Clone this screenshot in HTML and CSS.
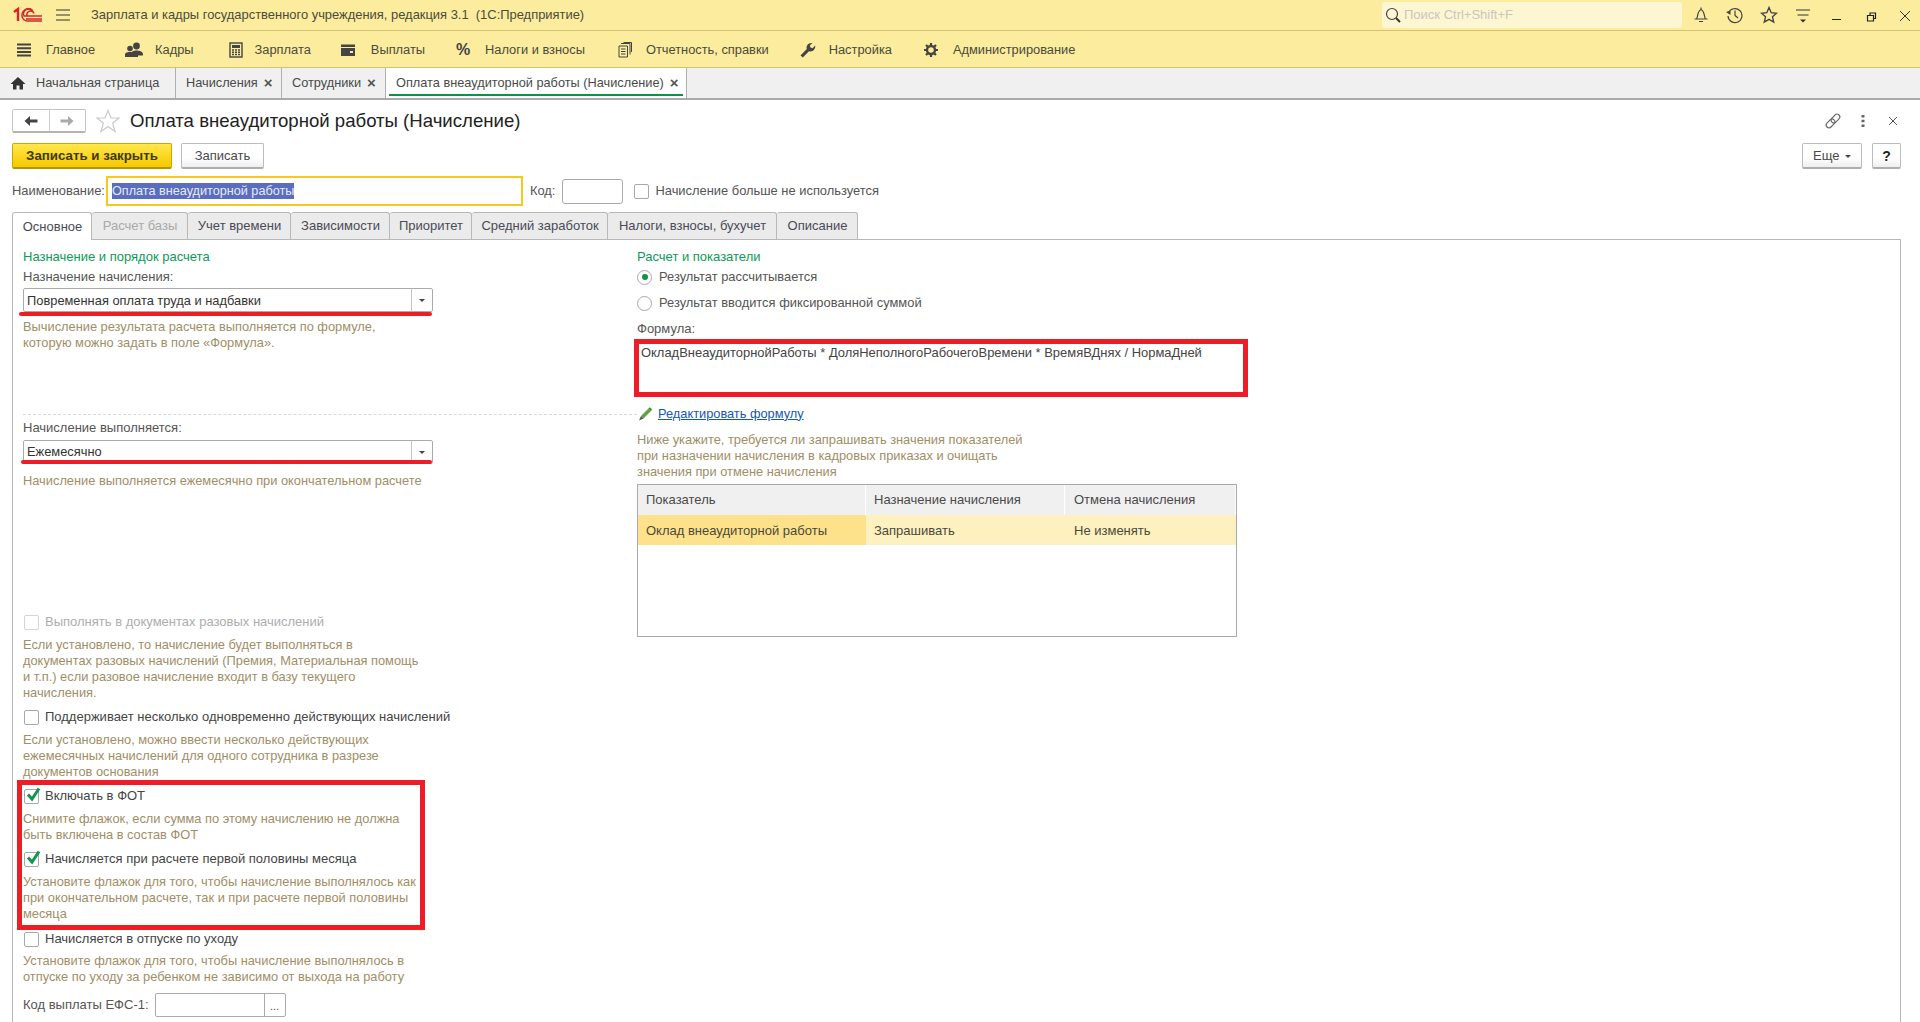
FILE: index.html
```html
<!DOCTYPE html>
<html lang="ru">
<head>
<meta charset="utf-8">
<title>Оплата внеаудиторной работы (Начисление)</title>
<link rel="stylesheet" href="styles.css">
</head>
<body>
<div class="page">
  <header class="titlebar">
    <svg class="logo" viewBox="0 0 30 16" width="30" height="16"><path d="M1 5 L5 2 V14" fill="none" stroke="#d8232a" stroke-width="2.4"/><path d="M20 4.5 A5 5 0 1 0 11 9 H29 M21 6.5 A3 3 0 1 0 14 9" fill="none" stroke="#d8232a" stroke-width="1.5"/><path d="M19 3 A6.5 6.5 0 0 0 9 9 A5.5 5.5 0 0 0 15 14 H29 M13 12 H29" fill="none" stroke="#d8232a" stroke-width="1.5"/></svg>
    <svg class="burger" viewBox="0 0 14 12" width="14" height="12"><path d="M0 1H14M0 6H14M0 11H14" stroke="#333" stroke-width="1"/></svg>
    <span class="app-title">Зарплата и кадры государственного учреждения, редакция 3.1&nbsp; (1С:Предприятие)</span>
    <div class="search">
      <svg viewBox="0 0 16 16" width="16" height="16"><circle cx="7" cy="7" r="5.5" fill="none" stroke="#444" stroke-width="1.2"/><path d="M11 11L15 15" stroke="#333" stroke-width="2"/></svg>
      <span>Поиск Ctrl+Shift+F</span>
    </div>
    <div class="sys-icons">
      <svg viewBox="0 0 16 18" width="16" height="18"><path d="M8 1.5V3M3.5 13C5 11 4 5.500 8 3.500C12 5.500 11 11 12.500 13H1.500H14.500M6 15.500H10" fill="none" stroke="#444" stroke-width="1.2"/></svg>
      <svg viewBox="0 0 18 18" width="18" height="18"><path d="M2.500 7A7 7 0 1 1 2 10" fill="none" stroke="#444" stroke-width="1.200"/><path d="M0 6L4.500 4.500V9Z" fill="#444"/><path d="M9 4.500V9.500L12 12" fill="none" stroke="#444" stroke-width="1.200"/></svg>
      <svg viewBox="0 0 18 18" width="18" height="18"><path d="M9 1.500L11.200 6.700L16.500 7.200L12.500 10.800L13.700 16L9 13.300L4.300 16L5.500 10.800L1.500 7.200L6.800 6.700Z" fill="none" stroke="#444" stroke-width="1.400"/></svg>
      <svg viewBox="0 0 16 16" width="16" height="16"><path d="M1 3H15M2.500 8H13.500" stroke="#333" stroke-width="1"/><path d="M5 12.500H11L8 15.500Z" fill="#333"/></svg>
      <svg viewBox="0 0 16 16" width="16" height="16"><path d="M3 12.500H12" stroke="#222" stroke-width="1"/></svg>
      <svg viewBox="0 0 16 16" width="16" height="16"><path d="M4.500 8.500H10.500V14H4.500ZM7 8.500V6H12.500V11.500H10.500" fill="none" stroke="#222" stroke-width="1.200"/></svg>
      <svg viewBox="0 0 16 16" width="16" height="16"><path d="M3 4L13 14M13 4L3 14" stroke="#333" stroke-width="1"/></svg>
    </div>
  </header>

  <nav class="sections">
    <a class="sec s1"><svg viewBox="0 0 16 14" width="16" height="14"><path d="M1 1.500H15M1 5.200H15M1 8.900H15M1 12.600H15" stroke="#444" stroke-width="2"/></svg><span>Главное</span></a>
    <a class="sec s2"><svg viewBox="0 0 18 16" width="18" height="16"><circle cx="11.500" cy="4" r="3.400" fill="#444"/><path d="M6 15V12C6 9.500 9 8.500 11.500 8.500S18 9.500 18 12V13.500H13V15Z" fill="#444"/><circle cx="5" cy="6.500" r="2.800" fill="#444"/><path d="M0 15V12.500C0 10.500 3 10 5 10S8 10.500 8 11V15Z" fill="#444"/></svg><span>Кадры</span></a>
    <a class="sec s3"><svg viewBox="0 0 14 16" width="14" height="16"><rect x="1" y="1" width="12" height="14" fill="none" stroke="#444" stroke-width="1.400"/><rect x="3" y="3" width="8" height="3" fill="#444"/><path d="M3 8H5M6 8H8M9 8H11M3 10.200H5M6 10.200H8M9 10.200H11M3 12.500H5M6 12.500H8M9 12.500H11" stroke="#444" stroke-width="1.400"/></svg><span>Зарплата</span></a>
    <a class="sec s4"><svg viewBox="0 0 16 14" width="16" height="14"><path d="M1 1.500H15V4H1Z" fill="#444"/><path d="M1 5H15V13H1ZM10 8V10H13V8Z" fill="#444" fill-rule="evenodd"/></svg><span>Выплаты</span></a>
    <a class="sec s5"><span class="pct">%</span><span>Налоги и взносы</span></a>
    <a class="sec s6"><svg viewBox="0 0 14 16" width="14" height="16"><path d="M1 4H9.500V15H1ZM3 1.500H12V12.500M5.500 0.500H13.500V10" fill="none" stroke="#444" stroke-width="1"/><path d="M3 7H7.500M3 9.500H7.500M3 12H7.500" stroke="#444" stroke-width="1"/></svg><span>Отчетность, справки</span></a>
    <a class="sec s7"><svg viewBox="0 0 16 16" width="16" height="16"><path d="M0.500 13.500L6.800 7C5.800 3.500 8.500 0.500 12.500 1L9.800 3.600L10.500 5.600L12.500 6.300L15.200 3.500C15.700 7.500 12.500 10.300 9 9.200L2.800 15.500Z" fill="#444"/></svg><span>Настройка</span></a>
    <a class="sec s8"><svg viewBox="0 0 16 16" width="16" height="16"><circle cx="8" cy="8" r="4" fill="none" stroke="#444" stroke-width="2.400"/><path d="M8 1V3.500M8 12.500V15M1 8H3.500M12.500 8H15M3 3L4.800 4.800M11.200 11.200L13 13M3 13L4.800 11.200M11.200 4.800L13 3" stroke="#444" stroke-width="2.200"/></svg><span>Администрирование</span></a>
  </nav>

  <div class="opened">
    <div class="otab home"><svg viewBox="0 0 16 14" width="16" height="14"><path d="M8 1L15.500 8H13V13.500H9.500V9.500H6.500V13.500H3V8H0.500Z" fill="#333"/></svg><span>Начальная страница</span></div>
    <div class="otab o2"><span>Начисления</span><b class="x">×</b></div>
    <div class="otab o3"><span>Сотрудники</span><b class="x">×</b></div>
    <div class="otab active"><span>Оплата внеаудиторной работы (Начисление)</span><b class="x">×</b></div>
  </div>

  <main class="form">
    <div class="form-head">
      <div class="nav-btns">
        <span class="nav-b"><svg viewBox="0 0 14 12" width="14" height="12"><path d="M0.500 6L6 1V4.500H13.500V7.500H6V11Z" fill="#444"/></svg></span>
        <span class="nav-b"><svg viewBox="0 0 14 12" width="14" height="12"><path d="M13.500 6L8 1V4.500H0.500V7.500H8V11Z" fill="#aaa"/></svg></span>
      </div>
      <svg class="fav" viewBox="0 0 24 24" width="24" height="24"><path d="M12 1.500L15 9H23L16.700 14L19 22.500L12 17.500L5 22.500L7.300 14L1 9H9Z" fill="none" stroke="#c9c9c9" stroke-width="1.200"/></svg>
      <h1>Оплата внеаудиторной работы (Начисление)</h1>
      <div class="head-tools">
        <svg viewBox="0 0 18 18" width="18" height="18"><g transform="rotate(-45 9 9)" fill="none" stroke="#666" stroke-width="1.100"><rect x="0.500" y="6.200" width="10" height="5.600" rx="2.800"/><rect x="7.500" y="6.200" width="10" height="5.600" rx="2.800"/></g></svg>
        <svg viewBox="0 0 4 14" width="4" height="14"><path d="M0.500 1H3.500V3.500H0.500ZM0.500 5.800H3.500V8.300H0.500ZM0.500 10.600H3.500V13H0.500Z" fill="#666"/></svg>
        <svg viewBox="0 0 10 10" width="10" height="10"><path d="M1 1L9 9M9 1L1 9" stroke="#555" stroke-width="1"/></svg>
      </div>
    </div>

    <div class="cmd">
      <button class="btn primary">Записать и закрыть</button>
      <button class="btn plain">Записать</button>
      <button class="btn more">Еще <i class="caret"></i></button>
      <button class="btn help-btn">?</button>
    </div>

    <div class="name-row">
      <label>Наименование:</label>
      <div class="name-input"><mark>Оплата внеаудиторной работы</mark></div>
      <label class="code-l">Код:</label>
      <div class="code-input"></div>
      <span class="cb"></span>
      <span class="cb-t">Начисление больше не используется</span>
    </div>

    <div class="ftabs">
      <div class="ftab on t1">Основное</div>
      <div class="ftab dis t2">Расчет базы</div>
      <div class="ftab t3">Учет времени</div>
      <div class="ftab t4">Зависимости</div>
      <div class="ftab t5">Приоритет</div>
      <div class="ftab t6">Средний заработок</div>
      <div class="ftab t7">Налоги, взносы, бухучет</div>
      <div class="ftab t8">Описание</div>
    </div>

    <section class="panel">
      <div class="col-left">
        <div class="group">Назначение и порядок расчета</div>
        <div class="lbl l-first">Назначение начисления:</div>
        <div class="select s-first"><span>Повременная оплата труда и надбавки</span><i class="sel-btn"><i class="caret"></i></i></div>
        <p class="help">Вычисление результата расчета выполняется по формуле,<br>которую можно задать в поле «Формула».</p>
        <div class="dash"></div>
        <div class="lbl tight">Начисление выполняется:</div>
        <div class="select s-second"><span>Ежемесячно</span><i class="sel-btn"><i class="caret"></i></i></div>
        <p class="help h3">Начисление выполняется ежемесячно при окончательном расчете</p>

        <div class="check off c-far"><span class="cb"></span><span>Выполнять в документах разовых начислений</span></div>
        <p class="help">Если установлено, то начисление будет выполняться в<br>документах разовых начислений (Премия, Материальная помощь<br>и т.п.) если разовое начисление входит в базу текущего<br>начисления.</p>
        <div class="check"><span class="cb"></span><span>Поддерживает несколько одновременно действующих начислений</span></div>
        <p class="help">Если установлено, можно ввести несколько действующих<br>ежемесячных начислений для одного сотрудника в разрезе<br>документов основания</p>
        <div class="check"><span class="cb"><svg viewBox="0 0 16 16" width="16" height="16"><path d="M3 7.500L7 12L14 1.500" fill="none" stroke="#0f9650" stroke-width="3"/></svg></span><span>Включать в ФОТ</span></div>
        <p class="help">Снимите флажок, если сумма по этому начислению не должна<br>быть включена в состав ФОТ</p>
        <div class="check"><span class="cb"><svg viewBox="0 0 16 16" width="16" height="16"><path d="M3 7.500L7 12L14 1.500" fill="none" stroke="#0f9650" stroke-width="3"/></svg></span><span>Начисляется при расчете первой половины месяца</span></div>
        <p class="help">Установите флажок для того, чтобы начисление выполнялось как<br>при окончательном расчете, так и при расчете первой половины<br>месяца</p>
        <div class="check c9"><span class="cb"></span><span>Начисляется в отпуске по уходу</span></div>
        <p class="help h6">Установите флажок для того, чтобы начисление выполнялось в<br>отпуске по уходу за ребенком не зависимо от выхода на работу</p>
        <div class="efs"><span class="lbl-i">Код выплаты ЕФС-1:</span><div class="efs-input"><i class="efs-btn">...</i></div></div>
      </div>

      <div class="col-right">
        <div class="group">Расчет и показатели</div>
        <div class="radio r1"><span class="rd on"></span><span>Результат рассчитывается</span></div>
        <div class="radio r2"><span class="rd"></span><span>Результат вводится фиксированной суммой</span></div>
        <div class="lbl r2">Формула:</div>
        <div class="formula">ОкладВнеаудиторнойРаботы * ДоляНеполногоРабочегоВремени * ВремяВДнях / НормаДней</div>
        <div class="edit">
          <svg viewBox="0 0 16 16" width="16" height="16"><path d="M4 10L11.500 2.500L14 5L6.500 12.500Z" fill="#5aa63a"/><path d="M11.500 2.500L12.800 1.200L15 3.500L14 5Z" fill="#3d7f28"/><path d="M4 10L6.500 12.500L2 14.500Z" fill="#555"/></svg>
          <a>Редактировать формулу</a>
        </div>
        <p class="help h11">Ниже укажите, требуется ли запрашивать значения показателей<br>при назначении начисления в кадровых приказах и очищать<br>значения при отмене начисления</p>
        <div class="grid">
          <div class="grid-h"><div class="gc g1">Показатель</div><div class="gc g2">Назначение начисления</div><div class="gc g3">Отмена начисления</div></div>
          <div class="grid-r"><div class="gc g1 cur">Оклад внеаудиторной работы</div><div class="gc g2">Запрашивать</div><div class="gc g3">Не изменять</div></div>
        </div>
      </div>
    </section>
  </main>

  <div class="redline rl1"></div>
  <div class="redline rl2"></div>
  <div class="redbox rb1"></div>
  <div class="redbox rb2"></div>
</div>
</body>
</html>
```
FILE: styles.css
```css
* { box-sizing: border-box; }
html, body { margin: 0; padding: 0; }
body { font-family: "Liberation Sans", Arial, sans-serif; font-size: 13px; line-height: 16px; color: #4a4a4a; background: #fff; }
.page { position: relative; width: 1920px; height: 1022px; overflow: hidden; }
svg { display: block; flex: none; }

.titlebar { height: 31px; background: #fbec9e; border-bottom: 1px solid #d2c272; display: flex; align-items: center; }
.logo { margin-left: 13px; }
.burger { margin-left: 13px; }
.app-title { margin-left: 21px; color: #4b4b3c; font-size: 12.93px; }
.search { position: absolute; left: 1382px; top: 2px; width: 300px; height: 26px; background: #fdf6d2; border-radius: 2px; display: flex; align-items: center; padding-left: 3px; color: #c8c8c0; }
.search span { margin-left: 3px; }
.sys-icons { position: absolute; left: 1684px; top: 6px; display: grid; grid-template-columns: repeat(7, 34px); justify-items: center; align-items: center; height: 18px; }

.sections { height: 37px; padding-top: 1px; background: #fbec9e; border-bottom: 1px solid #cfc07a; position: relative; display: flex; align-items: center; font-size: 12.85px; }
.sec { display: flex; align-items: center; color: #4b4b3c; }
.s1 { margin-left: 16px; } .s1 span { margin-left: 14px; }
.s2 { margin-left: 30px; } .s2 span { margin-left: 12px; }
.s3 { margin-left: 35px; } .s3 span { margin-left: 12px; }
.s4 { margin-left: 29px; } .s4 span { margin-left: 15px; }
.s5 { margin-left: 31px; } .s5 span:last-child { margin-left: 13px; }
.s6 { margin-left: 33px; } .s6 span { margin-left: 14px; }
.s7 { margin-left: 31px; } .s7 span { margin-left: 13px; }
.s8 { margin-left: 31px; } .s8 span { margin-left: 14px; }
.pct { font-size: 16px; font-weight: 700; color: #444; width: 16px; }

.opened { height: 32px; background: #f0f0f0; border-bottom: 2px solid #aaa; display: flex; font-size: 12.75px; }
.otab { height: 30px; border-right: 1px solid #b0b0b0; display: flex; align-items: center; color: #4a4a4a; }
.home { width: 176px; padding-left: 10px; } .home span { margin-left: 10px; }
.o2 { width: 106px; padding-left: 10px; }
.o3 { width: 104px; padding-left: 10px; }
.active { width: 301px; padding-left: 10px; background: #fff; position: relative; }
.active::after { content: ""; position: absolute; left: 3px; right: 3px; bottom: 2px; height: 2px; background: #0b9347; }
.x { margin-left: 6px; font-size: 15px; color: #555; font-weight: 700; }

.form-head { height: 24px; margin: 9px 12px 0 12px; display: flex; align-items: center; }
.nav-btns { width: 74px; height: 24px; display: flex; border: 1px solid #c4c4c4; border-bottom: 2px solid #b4b4b4; border-radius: 2px; }
.nav-b { flex: 1; display: flex; align-items: center; justify-content: center; }
.nav-b + .nav-b { border-left: 1px solid #d0d0d0; }
.fav { margin-left: 10px; }
h1 { margin: 0 0 0 10px; font-size: 18.6px; font-weight: 400; color: #222; line-height: 24px; }
.head-tools { margin-left: auto; display: grid; grid-template-columns: repeat(3, 30px); justify-items: center; align-items: center; }

.cmd { height: 26px; margin: 10px 19px 0 12px; display: flex; }
.btn { font: inherit; height: 26px; border: 1px solid #bcbcbc; border-bottom: 2px solid #aeaeae; border-radius: 2px; background: linear-gradient(#fff 60%, #eee); color: #4a4a4a; padding: 0; }
.primary { width: 160px; border-color: #c9a900; border-bottom-color: #b39600; background: linear-gradient(#ffe74d, #f6c900); color: #3e3a10; font-weight: 700; font-size: 13.3px; }
.plain { width: 83px; margin-left: 9px; }
.more { width: 60px; margin-left: auto; }
.help-btn { width: 29px; margin-left: 10px; font-weight: 700; font-size: 14px; color: #222; }
.caret { display: inline-block; width: 0; height: 0; border: 3px solid transparent; border-top: 3px solid #444; border-bottom: 0; vertical-align: middle; margin-left: 2px; }

.name-row { height: 30px; margin: 7px 0 0 12px; display: flex; align-items: center; color: #555; font-size: 12.9px; }
.name-input { width: 417px; height: 30px; margin-left: 1px; border: 2px solid #f8c81e; padding: 5px 4px; background: #fff; }
.name-input mark { background: #5a6dc0; color: #e8ebf7; display: inline-block; height: 16px; font-size: 12.66px; }
.code-l { margin-left: 7px; }
.code-input { width: 61px; height: 25px; margin-left: 7px; border: 1px solid #aaa; border-radius: 3px; }
.cb { width: 15px; height: 15px; border: 1px solid #a8a8a8; border-radius: 2px; background: #fff; display: inline-block; flex: none; position: relative; }
.cb svg { position: absolute; left: 0; top: -3px; }
.name-row .cb { margin-left: 11px; }
.cb-t { margin-left: 6px; }

.ftabs { height: 27px; margin: 6px 0 0 12px; display: flex; position: relative; z-index: 1; }
.ftab { height: 27px; padding-left: 1px; background: #ebebeb; border: 1px solid #b8b8b8; border-bottom: 0; border-left: 0; border-radius: 3px 3px 0 0; display: flex; align-items: center; justify-content: center; color: #4a4a55; }
.t1 { width: 80px; } .t2 { width: 96px; } .t3 { width: 103px; } .t4 { width: 99px; }
.t5 { width: 82px; } .t6 { width: 136px; } .t7 { width: 169px; } .t8 { width: 81px; }
.on { background: #fff; border-left: 1px solid #b8b8b8; height: 28px; z-index: 2; }
.dis { color: #a9a9a9; }

.panel { margin: 0 0 0 12px; width: 1889px; height: 783px; border: 1px solid #b8b8b8; border-bottom: 0; padding: 8px 0 0 10px; display: flex; }
.col-left { width: 614px; flex: none; }
.col-right { flex: 1; }
.group { color: #0b9a58; padding-top: 1px; height: 16px; }
.lbl { margin-top: 5px; color: #555; }
.lbl.tight { margin-top: 5px; }
.lbl.r2 { margin-top: 10px; }
.select { width: 410px; height: 24px; margin-top: 3px; border: 1px solid #aaa; border-radius: 2px; display: flex; align-items: center; padding-left: 3px; color: #333; justify-content: space-between; font-size: 12.87px; }
.s-first span { padding-top: 1px; }
.s-second { margin-top: 4px; }
.sel-btn { width: 21px; height: 22px; border-left: 1px solid #c4c4c4; display: flex; align-items: center; justify-content: center; }
.sel-btn .caret { margin: 0; }
.help { margin: 7px 0 0; color: #9f8e66; font-size: 12.83px; }
.h3 { margin-top: 9px; }
.h6 { margin-top: 6px; }
.h11 { margin-top: 11px; }
.dash { margin-top: 63px; width: 614px; border-top: 1px dashed #d8d8d8; height: 1px; }
.check { margin-top: 8px; height: 16px; padding-left: 1px; display: flex; align-items: center; color: #444; }
.check .cb { margin-right: 6px; }
.c-far { margin-top: 125px; }
.c9 { margin-top: 9px; }
.off { color: #adadad; }
.off .cb { border-color: #d4d4d4; }
.efs { margin-top: 8px; display: flex; align-items: center; color: #555; }
.efs-input { width: 131px; height: 24px; margin-left: 6px; border: 1px solid #aaa; border-radius: 2px; display: flex; justify-content: flex-end; }
.efs-btn { width: 21px; border-left: 1px solid #aaa; font-style: normal; text-align: center; line-height: 24px; font-size: 11px; }

.radio { display: flex; align-items: center; height: 16px; color: #555; font-size: 12.9px; }
.r1 { margin-top: 5px; }
.radio.r2 { margin-top: 10px; }
.rd { width: 15px; height: 15px; border: 1px solid #a8a8a8; border-radius: 50%; margin-right: 7px; flex: none; display: flex; align-items: center; justify-content: center; }
.rd.on::after { content: ""; width: 6px; height: 6px; border-radius: 50%; background: #0b9347; }
.formula { margin-top: 7px; height: 53px; padding: 1px 0 0 4px; color: #444; font-size: 12.94px; }
.edit { margin-top: 8px; height: 16px; padding-top: 1px; display: flex; align-items: center; font-size: 12.8px; }
.edit a { margin-left: 5px; color: #1656b8; text-decoration: underline; }
.grid { margin-top: 4px; width: 600px; height: 153px; border: 1px solid #aaa; }
.grid-h, .grid-r { display: flex; height: 30px; align-items: stretch; }
.grid-h .gc { background: #f0f0f0; border-right: 1px solid #fff; padding-top: 0; }
.grid-r { background: #fef1c0; color: #4a4a3a; }
.gc { display: flex; align-items: center; padding: 1px 0 0 8px; }
.g1 { width: 228px; } .g2 { width: 199px; } .g3 { flex: 1; padding-left: 9px; }
.cur { background: #fde28b; }

.redline { position: absolute; height: 4px; background: #ee1c25; border-radius: 2px; }
.rl1 { left: 19px; top: 312px; width: 413px; }
.rl2 { left: 21px; top: 460px; width: 411px; }
.redbox { position: absolute; border: 5px solid #ee1c25; }
.rb1 { left: 634px; top: 339px; width: 614px; height: 58px; }
.rb2 { left: 17px; top: 780px; width: 408px; height: 150px; }
```
